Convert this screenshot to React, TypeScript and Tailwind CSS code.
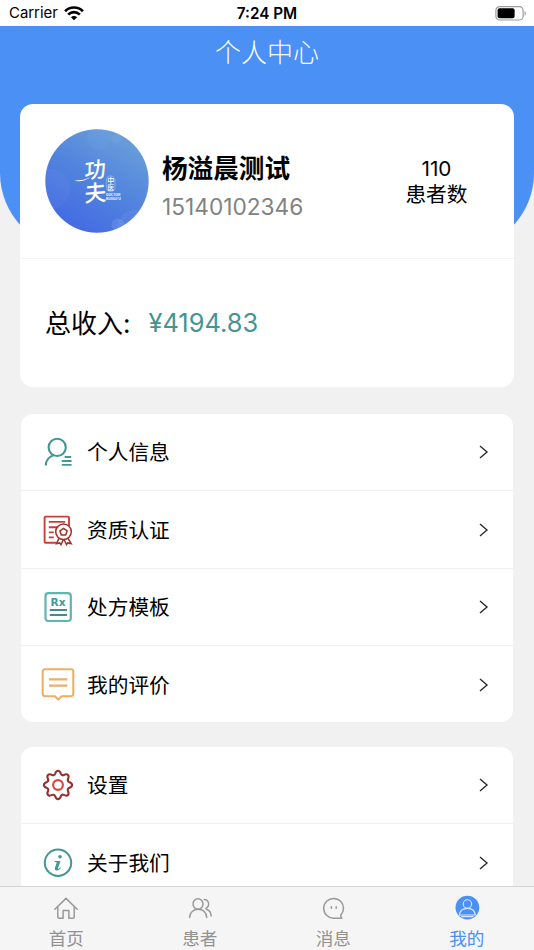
import type { ReactNode } from "react";

const TEAL = "#459795";

function WifiIcon() {
  return (
    <svg width="20" height="15" viewBox="0 0 20 15" fill="none" stroke="#000" strokeWidth="2.7">
      <path d="M1.1 5.2a12.6 12.6 0 0 1 17.8 0" />
      <path d="M4.2 8.6a8.2 8.2 0 0 1 11.6 0" />
      <path d="M10 14.3 6.9 11.2a4.4 4.4 0 0 1 6.2 0z" fill="#000" stroke="none" />
    </svg>
  );
}

function BatteryIcon() {
  return (
    <svg width="32" height="15" viewBox="0 0 32 15">
      <rect x="0.9" y="0.6" width="27.2" height="13.4" rx="3.8" fill="none" stroke="#9b9b9b" strokeWidth="1.2" />
      <rect x="2.6" y="2.3" width="17" height="10" rx="2" fill="#000" />
      <path d="M29.6 5v4.8c1.6-.6 1.6-4.2 0-4.8z" fill="#9b9b9b" />
    </svg>
  );
}

function Avatar() {
  return (
    <svg className="size-[104px] shrink-0" viewBox="0 0 104 104">
      <defs>
        <linearGradient id="sky" x1="0.25" y1="1" x2="0.8" y2="0.1">
          <stop offset="0" stopColor="#4368e4" />
          <stop offset="0.5" stopColor="#5082de" />
          <stop offset="1" stopColor="#689dda" />
        </linearGradient>
        <clipPath id="disc">
          <circle cx="52" cy="52" r="51.7" />
        </clipPath>
      </defs>
      <g clipPath="url(#disc)">
        <rect width="104" height="104" fill="url(#sky)" />
        <circle cx="5" cy="60" r="20" fill="#fff" opacity="0.035" />
        <circle cx="73" cy="96" r="6.5" fill="#fff" opacity="0.1" />
        <circle cx="92" cy="100" r="20" fill="#fff" opacity="0.05" />
        <circle cx="54" cy="9" r="12" fill="#fff" opacity="0.03" />
        <circle cx="71" cy="10" r="5" fill="#fff" opacity="0.05" />
        <g fill="#fff" fontFamily="'Noto Sans CJK SC', sans-serif">
          <text x="0" y="0" fontSize="21.5" fontWeight="500" transform="translate(39.3 50) rotate(-7) skewX(-9)">功</text>
          <text x="0" y="0" fontSize="22" fontWeight="500" transform="translate(39.6 73) rotate(-5) skewX(-4)">夫</text>
          <text x="65.8" y="47.6" fontSize="7" fontWeight="500" style={{ writingMode: "vertical-rl" }}>
            中医
          </text>
          <text x="61" y="66.6" fontSize="2.8" fontWeight="700" textLength="14.3" lengthAdjust="spacingAndGlyphs">DOCTOR</text>
          <text x="61" y="70.8" fontSize="2.8" fontWeight="700" textLength="14.8" lengthAdjust="spacingAndGlyphs">KUNGFU</text>
        </g>
        <path d="M29.2 51.6c6 .1 12-1 16.5-3.8-5 4.2-12 5.6-16.5 3.8z" fill="#fff" />
        <path d="M50 67.2c4 2.6 7.5 3.6 11.4 3.6-2 1.8-7 1.4-11.4-3.6z" fill="#fff" />
        <rect x="61.4" y="46.9" width="8.6" height="15.6" rx="4.3" fill="none" stroke="#fff" strokeWidth="0.5" opacity="0.6" />
      </g>
    </svg>
  );
}

function ProfileIcon() {
  return (
    <svg width="34" height="34" viewBox="0 0 34 34" fill="none" stroke={TEAL} strokeWidth="2.1">
      <circle cx="16.2" cy="12.4" r="8.6" />
      <path d="M4.8 30.4c0-5 3.4-9 8.2-10.4" />
      <path d="M23.6 22h6.6M20.8 26h9.8M20.8 29.9h9.8" strokeWidth="1.8" />
    </svg>
  );
}

function CertificateIcon() {
  return (
    <svg width="34" height="34" viewBox="0 0 34 34" fill="none" stroke="#c4413a" strokeWidth="1.9">
      <path d="M28 13V4.6a1 1 0 0 0-1-1H4.6a1 1 0 0 0-1 1v24.2a1 1 0 0 0 1 1H15.4" />
      <path d="M7.8 8.9h16.4M7.8 14.3h9.5M7.8 19.4h5M7.8 24.4h5" />
      <g stroke="#9d352d" strokeWidth="1.5">
        <circle cx="22.5" cy="18.8" r="7.8" />
        <path d="m22.5 15.3 3.6 2.6-1.4 4.2h-4.4l-1.4-4.2z" strokeLinejoin="round" />
        <path d="m18 25.4-2.5 5.2 3.2-.7 1.3 1.8 2.2-5M27 25.4l3.2 5.2-3.6-.7-1.1 1.8-2.3-5" />
      </g>
    </svg>
  );
}

function PrescriptionIcon() {
  return (
    <svg width="34" height="34" viewBox="0 0 34 34" fill="none">
      <rect x="4.5" y="3.1" width="25.3" height="27.9" rx="3" stroke="#5eb5b3" strokeWidth="2.2" />
      <text x="9.6" y="15.6" fontSize="9.6" fontWeight="700" fontFamily="'DejaVu Sans', sans-serif" textLength="15" lengthAdjust="spacingAndGlyphs" fill={TEAL}>
        Rx
      </text>
      <path d="M8.8 19.9h17.2M8.8 24.9h17.2" stroke="#428c8a" strokeWidth="2" />
    </svg>
  );
}

function ReviewIcon() {
  return (
    <svg width="34" height="34" viewBox="0 0 34 34" fill="none" stroke="#edae67" strokeWidth="2.1">
      <path
        d="M4 1.2h26a2.3 2.3 0 0 1 2.3 2.3v22.4a2.3 2.3 0 0 1-2.3 2.3h-9.2l-3.5 3.3-3.5-3.3H4a2.3 2.3 0 0 1-2.3-2.3V3.5A2.3 2.3 0 0 1 4 1.2z"
        strokeLinejoin="round"
      />
      <path d="M8 11.4h18.2M8 17.6h18.2" />
    </svg>
  );
}

function GearIcon() {
  return (
    <svg width="34" height="34" viewBox="0 0 34 34" fill="none" strokeWidth="2.1">
      <path
        stroke="#982f2a"
        strokeLinejoin="round"
        d="M14.1 5.8C14.8 3.8 15.4 2.8 17 2.8s2.2 1 2.9 3c.5 1.2 1.6 1.7 2.8 1.2 2-.9 3.2-1.2 4.3-.1s.8 2.3-.1 4.3c-.5 1.2 0 2.3 1.2 2.8 2 .7 3 1.3 3 3s-1 2.2-3 2.9c-1.2.5-1.7 1.6-1.2 2.8.9 2 1.2 3.2.1 4.3s-2.3.8-4.3-.1c-1.2-.5-2.3 0-2.8 1.2-.7 2-1.3 3-2.9 3s-2.2-1-2.9-3c-.5-1.2-1.6-1.7-2.8-1.2-2 .9-3.2 1.2-4.3.1s-.8-2.3.1-4.3c.5-1.2 0-2.3-1.2-2.8-2-.7-3-1.3-3-2.9s1-2.3 3-3c1.2-.5 1.7-1.6 1.2-2.8-.9-2-1.2-3.2-.1-4.3s2.3-.8 4.3.1c1.2.5 2.3 0 2.8-1.2z"
      />
      <circle cx="17" cy="17" r="4.9" stroke="#e0433e" />
    </svg>
  );
}

function AboutIcon() {
  return (
    <svg width="34" height="34" viewBox="0 0 34 34" fill="none">
      <circle cx="17" cy="16.7" r="13.2" stroke={TEAL} strokeWidth="2" />
      <circle cx="19" cy="10.8" r="1.8" fill={TEAL} />
      <path d="M13.6 15h5.9l-2.6 7.3c-.2.8.5.6 2.6-1.1l.5.7c-2.8 3.3-7 3.4-6.1.2l1.8-5.3c.2-.7-.1-.9-2.1-.9z" fill={TEAL} />
    </svg>
  );
}

function Chevron() {
  return (
    <svg width="12" height="16" viewBox="0 0 12 16" fill="none" stroke="#282828" strokeWidth="1.35">
      <path d="m2 2 7 6-7 6" />
    </svg>
  );
}

function MenuRow({ icon, label }: { icon: ReactNode; label: string }) {
  return (
    <div className="flex h-[77.4px] shrink-0 items-center border-b border-[#f0f0f0] pr-[23px] pl-[19.5px] last:border-b-0">
      {icon}
      <span className="ml-[12.5px] flex-1 pt-[2px] text-[20.7px] leading-[30px]">{label}</span>
      <Chevron />
    </div>
  );
}

function HomeIcon() {
  return (
    <svg width="28" height="26" viewBox="0 0 28 26" fill="none" stroke="#999" strokeWidth="1.5" strokeLinejoin="round" strokeLinecap="round">
      <path d="M2.8 14.3 14 3.4l11.2 10.9M5.8 12v10a1.2 1.2 0 0 0 1.2 1.2h4.1v-7.8h5.8v7.8H21a1.2 1.2 0 0 0 1.2-1.2V12" />
    </svg>
  );
}

function PatientsIcon() {
  return (
    <svg width="28" height="26" viewBox="0 0 28 26" fill="none" stroke="#999" strokeWidth="1.5" strokeLinecap="round">
      <ellipse cx="12" cy="9" rx="5" ry="5.3" />
      <path d="M3.6 22.5c0-5 4-8.2 8.6-8.2s8.5 3.2 8.5 8.2M18.2 4.6c5 .3 6 6.4 1.7 8.8M20.5 14.3c3 1.2 4.6 3.8 4.6 6.7" />
    </svg>
  );
}

function MessageIcon() {
  return (
    <svg width="28" height="26" viewBox="0 0 28 26" fill="none" stroke="#999" strokeWidth="1.5" strokeLinecap="round" strokeLinejoin="round">
      <path d="M22.8 23.2h-8.3A9.9 9.9 0 1 1 24.5 13.3c0 2.7-1 5-2.8 6.8 0 1.2.3 2.2 1.1 3.1z" />
      <path d="M12.3 11.7v1.6M17.2 11.7v1.6" />
    </svg>
  );
}

function MeIcon() {
  return (
    <svg width="28" height="26" viewBox="0 0 28 26" fill="none">
      <circle cx="14.4" cy="12.6" r="11.9" fill="#4b90f5" />
      <g stroke="#d8e7ff" strokeWidth="1.1">
        <circle cx="14.4" cy="9" r="4.2" />
        <path d="M6.4 20c.4-4.1 3.5-6.6 8-6.6s7.5 2.5 7.9 6.6zM8 21.6h12.5" />
      </g>
    </svg>
  );
}

function Tab({ icon, label, active = false }: { icon: ReactNode; label: string; active?: boolean }) {
  return (
    <div className={`flex flex-1 flex-col items-center pt-2 pr-px ${active ? "text-[#4b90f5]" : "text-[#929292]"}`}>
      <div className="h-[26px] shrink-0">{icon}</div>
      <span className="mt-[5px] shrink-0 text-[17.6px] leading-[26px]">{label}</span>
    </div>
  );
}

export default function App() {
  return (
    <div className="flex h-[950px] w-[534px] flex-col overflow-hidden bg-[#f1f1f1] font-['Inter','Noto_Sans_CJK_SC',sans-serif] text-black">
      <div className="grid h-[26px] shrink-0 grid-cols-3 items-center bg-white pt-px pr-[7px] pl-[9px] leading-[25px]">
        <div className="flex items-center gap-[6px]">
          <span className="text-[14.9px]">Carrier</span>
          <WifiIcon />
        </div>
        <span className="pr-[2px] text-center text-[15.3px] font-semibold">7:24 PM</span>
        <div className="flex justify-end">
          <BatteryIcon />
        </div>
      </div>

      <header className="h-[224px] shrink-0 rounded-b-[77px] bg-[#4b90f5] pt-[7px] text-center text-[26px] leading-[39px] font-light text-white">
        个人中心
      </header>

      <main className="-mt-[146.5px] flex min-h-0 flex-1 flex-col overflow-hidden">
        <section className="mx-[20px] h-[283.5px] shrink-0 rounded-[13px] bg-white">
          <div className="flex h-[155px] items-center border-b border-[#f3f3f3] pr-[46.5px] pl-[25px]">
            <Avatar />
            <div className="ml-[13px] flex-1 pt-[13px]">
              <div className="text-[25.6px] leading-[38px] font-bold">杨溢晨测试</div>
              <div className="mt-[1px] text-[22.7px] leading-[36px] text-[#828282]">15140102346</div>
            </div>
            <div className="pt-[3px] text-center text-[20.7px] leading-[26px]">
              <div>110</div>
              <div>患者数</div>
            </div>
          </div>
          <div className="flex h-[128px] items-center pt-[2px] pl-[25px] text-[26px] leading-[38px]">
            <span>总收入:</span>
            <span className="ml-[18px] pb-[2px] text-[25.4px] text-[#459492]">¥4194.83</span>
          </div>
        </section>

        <section className="mx-[21px] mt-[27px] flex h-[308px] shrink-0 flex-col overflow-hidden rounded-[12px] bg-white">
          <MenuRow icon={<ProfileIcon />} label="个人信息" />
          <MenuRow icon={<CertificateIcon />} label="资质认证" />
          <MenuRow icon={<PrescriptionIcon />} label="处方模板" />
          <MenuRow icon={<ReviewIcon />} label="我的评价" />
        </section>

        <section className="mx-[21px] mt-[24.5px] flex shrink-0 flex-col rounded-t-[12px] bg-white">
          <MenuRow icon={<GearIcon />} label="设置" />
          <MenuRow icon={<AboutIcon />} label="关于我们" />
        </section>
      </main>

      <nav className="flex h-16 shrink-0 border-t border-[#d4d4d4] bg-[#f5f5f5]">
        <Tab icon={<HomeIcon />} label="首页" />
        <Tab icon={<PatientsIcon />} label="患者" />
        <Tab icon={<MessageIcon />} label="消息" />
        <Tab icon={<MeIcon />} label="我的" active />
      </nav>
    </div>
  );
}
